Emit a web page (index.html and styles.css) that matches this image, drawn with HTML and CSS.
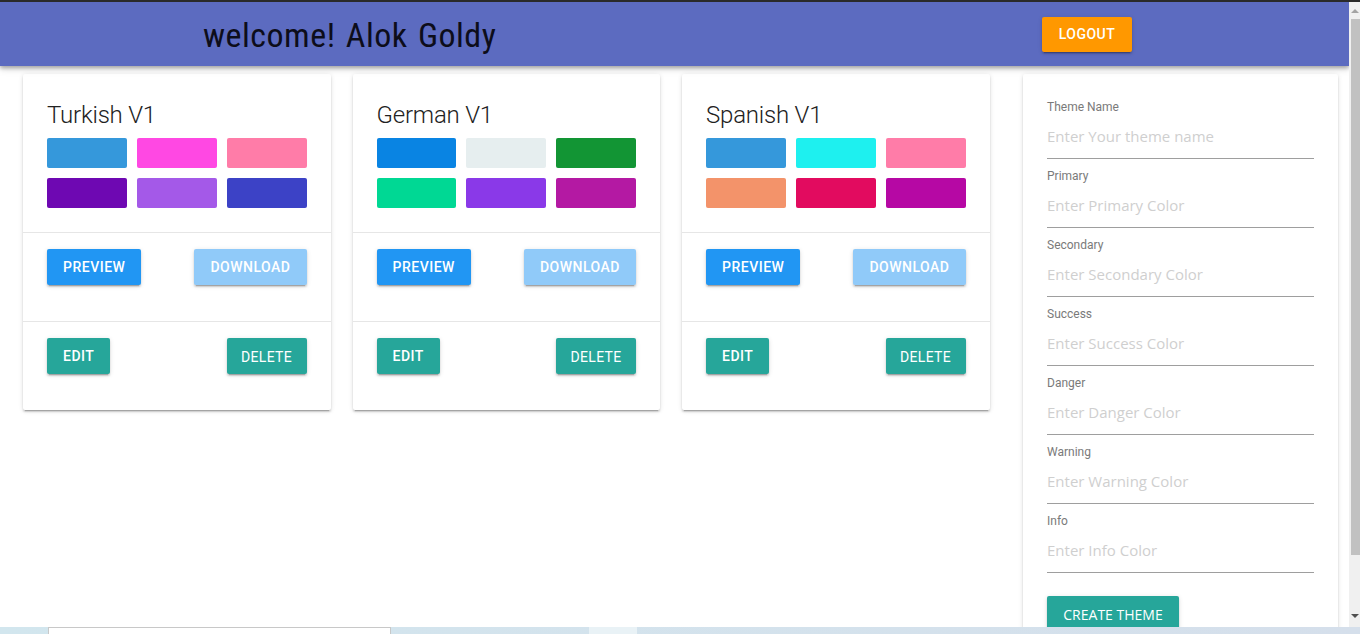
FILE: index.html
```html
<!DOCTYPE html>
<html lang="en">
<head>
<meta charset="utf-8">
<title>Theme Builder</title>
<link rel="stylesheet" href="styles.css">
</head>
<body>
<div class="frame-top"></div>
<div class="viewport">
  <div class="page">
    <header class="appbar">
      <h1 class="welcome">welcome! Alok Goldy</h1>
      <button class="btn btn-orange">LOGOUT</button>
    </header>
    <main class="content">
      <section class="cards">
        <article class="card">
          <div class="card-top">
            <h2 class="card-title">Turkish V1</h2>
            <div class="swatches">
              <span class="sw" style="background:#3598db"></span>
              <span class="sw" style="background:#ff48e3"></span>
              <span class="sw" style="background:#ff7ca8"></span>
              <span class="sw" style="background:#6e08b2"></span>
              <span class="sw" style="background:#a459e8"></span>
              <span class="sw" style="background:#3c42c6"></span>
            </div>
          </div>
          <div class="card-row">
            <button class="btn btn-blue">PREVIEW</button>
            <button class="btn btn-light">DOWNLOAD</button>
          </div>
          <div class="card-row">
            <button class="btn btn-teal">EDIT</button>
            <button class="btn btn-teal btn-thin">DELETE</button>
          </div>
        </article>
        <article class="card">
          <div class="card-top">
            <h2 class="card-title">German V1</h2>
            <div class="swatches">
              <span class="sw" style="background:#0984e3"></span>
              <span class="sw" style="background:#e6eeef"></span>
              <span class="sw" style="background:#129534"></span>
              <span class="sw" style="background:#00d894"></span>
              <span class="sw" style="background:#8a39e8"></span>
              <span class="sw" style="background:#b419a3"></span>
            </div>
          </div>
          <div class="card-row">
            <button class="btn btn-blue">PREVIEW</button>
            <button class="btn btn-light">DOWNLOAD</button>
          </div>
          <div class="card-row">
            <button class="btn btn-teal">EDIT</button>
            <button class="btn btn-teal btn-thin">DELETE</button>
          </div>
        </article>
        <article class="card">
          <div class="card-top">
            <h2 class="card-title">Spanish V1</h2>
            <div class="swatches">
              <span class="sw" style="background:#3598db"></span>
              <span class="sw" style="background:#1ef0ef"></span>
              <span class="sw" style="background:#ff7ca8"></span>
              <span class="sw" style="background:#f3936a"></span>
              <span class="sw" style="background:#e20b5f"></span>
              <span class="sw" style="background:#b608a4"></span>
            </div>
          </div>
          <div class="card-row">
            <button class="btn btn-blue">PREVIEW</button>
            <button class="btn btn-light">DOWNLOAD</button>
          </div>
          <div class="card-row">
            <button class="btn btn-teal">EDIT</button>
            <button class="btn btn-teal btn-thin">DELETE</button>
          </div>
        </article>
      </section>
      <aside class="form-card">
        <div class="field"><label>Theme Name</label><input type="text" placeholder="Enter Your theme name"></div>
        <div class="field"><label>Primary</label><input type="text" placeholder="Enter Primary Color"></div>
        <div class="field"><label>Secondary</label><input type="text" placeholder="Enter Secondary Color"></div>
        <div class="field"><label>Success</label><input type="text" placeholder="Enter Success Color"></div>
        <div class="field"><label>Danger</label><input type="text" placeholder="Enter Danger Color"></div>
        <div class="field"><label>Warning</label><input type="text" placeholder="Enter Warning Color"></div>
        <div class="field"><label>Info</label><input type="text" placeholder="Enter Info Color"></div>
        <button class="btn-create">CREATE THEME</button>
      </aside>
    </main>
  </div>
  <div class="scrollbar">
    <span class="arrow up"></span>
    <span class="thumb"></span>
    <span class="arrow down"></span>
  </div>
</div>
<div class="taskbar">
  <span class="tb-a"></span>
  <span class="tb-box"></span>
  <span class="tb-b"></span>
  <span class="tb-light"></span>
  <span class="tb-c"></span>
</div>
</body>
</html>
```
FILE: styles.css
```css
* { box-sizing: border-box; }
html, body {
  margin: 0;
  padding: 0;
  width: 1360px;
  height: 634px;
  overflow: hidden;
  background: #fff;
  font-family: Roboto, "Noto Sans", sans-serif;
}
body { display: flex; flex-direction: column; }

.frame-top { height: 2px; background: #2a2a2a; flex: none; }

.viewport { display: flex; height: 625px; flex: none; }
.page { width: 1349px; flex: none; overflow: hidden; display: flex; flex-direction: column; }

.appbar {
  height: 64px;
  flex: none;
  background: #5c6bc0;
  display: flex;
  align-items: center;
  justify-content: space-between;
  padding: 0 217px 0 203px;
  box-shadow: 0 2px 4px rgba(0,0,0,0.3), 0 3px 8px rgba(0,0,0,0.12);
  position: relative;
  z-index: 2;
}
.welcome {
  margin: 0;
  font-family: "Liberation Sans Narrow", "Roboto Condensed", Roboto, sans-serif;
  font-weight: 400;
  font-size: 34px;
  letter-spacing: 0.5px;
  word-spacing: 2px;
  color: #0d0d1a;
  line-height: 1;
  padding-top: 1px;
}

.btn {
  border: none;
  border-radius: 2px;
  height: 36px;
  padding: 0 16px;
  font-family: Roboto, sans-serif;
  font-weight: 500;
  font-size: 14px;
  letter-spacing: 0.5px;
  color: #fff;
  box-shadow: 0 2px 2px rgba(0,0,0,0.14), 0 1px 5px rgba(0,0,0,0.12), 0 3px 1px -2px rgba(0,0,0,0.2);
  cursor: pointer;
}
.btn-orange { background: #ff9800; height: 35px; padding: 0 0 1px; width: 90px; }
.btn-blue { background: #2196f3; }
.btn-light { background: #90caf9; }
.btn-teal { background: #26a69a; }
.btn-thin { font-weight: 400; letter-spacing: 0.3px; padding: 2px 0 0; width: 80px; }

.content {
  flex: 1;
  display: flex;
  align-items: flex-start;
  padding: 8px 11px 0 23px;
}
.cards { display: flex; gap: 22px; }
.card {
  width: 307.5px;
  background: #fff;
  border-radius: 2px;
  box-shadow: 0 2px 2px rgba(0,0,0,0.14), 0 1px 5px rgba(0,0,0,0.12), 0 3px 1px -2px rgba(0,0,0,0.2);
}
.card-top { padding: 27px 24px 24px; }
.card-title {
  margin: 0 0 9px;
  font-family: Roboto, sans-serif;
  font-weight: 300;
  font-size: 24px;
  line-height: 28px;
  letter-spacing: -0.2px;
  color: #222;
}
.swatches {
  display: grid;
  grid-template-columns: repeat(3, 1fr);
  grid-auto-rows: 30px;
  gap: 10px;
}
.sw { border-radius: 2px; }
.card-row {
  border-top: 1px solid #e6e6e6;
  padding: 16px 24px 36px;
  display: flex;
  justify-content: space-between;
  align-items: flex-start;
}

.form-card {
  margin-left: auto;
  width: 315px;
  height: 640px;
  background: #fff;
  border-radius: 2px;
  padding: 25px 24px 0;
  box-shadow: 0 2px 2px rgba(0,0,0,0.14), 0 1px 5px rgba(0,0,0,0.12), 0 3px 1px -2px rgba(0,0,0,0.2);
}
.field { margin-bottom: 9px; }
.field label {
  display: block;
  font-family: Roboto, sans-serif;
  font-size: 12px;
  line-height: 16px;
  color: #7a7a7a;
}
.field input {
  display: block;
  width: 100%;
  height: 44px;
  border: none;
  border-bottom: 1px solid #9e9e9e;
  padding: 0 0 1px;
  outline: none;
  font-family: "Open Sans", sans-serif;
  font-size: 15px;
  color: #333;
  background: transparent;
}
.field input::placeholder { color: #cfcfcf; }
.btn-create {
  margin-top: 14px;
  width: 132px;
  height: 36px;
  border: none;
  border-radius: 2px;
  background: #26a69a;
  color: #fff;
  font-family: "Open Sans", sans-serif;
  font-size: 14px;
  padding: 0;
  box-shadow: 0 2px 2px rgba(0,0,0,0.14), 0 1px 5px rgba(0,0,0,0.12);
}

.scrollbar {
  width: 11px;
  flex: none;
  background: #f0f0f0;
  display: flex;
  flex-direction: column;
  align-items: flex-end;
  padding-top: 7px;
}
.arrow { width: 0; height: 0; border-left: 4px solid transparent; border-right: 4px solid transparent; margin-right: 1px; }
.arrow.up { border-bottom: 4px solid #a3a3a3; }
.arrow.down { border-top: 4px solid #505050; margin-top: 59px; }
.thumb { width: 9px; height: 536px; background: #c1c1c1; margin-top: 6px; }

.taskbar {
  height: 7px;
  flex: none;
  display: flex;
  background: linear-gradient(90deg, #d2e6ee, #d5dfeb);
}
.tb-a { width: 48px; }
.tb-box { width: 343px; background: #fff; border-top: 1px solid #c8c8c8; border-left: 1px solid #c8c8c8; border-right: 1px solid #c8c8c8; }
.tb-b { width: 198px; }
.tb-light { width: 48px; background: #e9f2f6; }
.tb-c { flex: 1; }
```
